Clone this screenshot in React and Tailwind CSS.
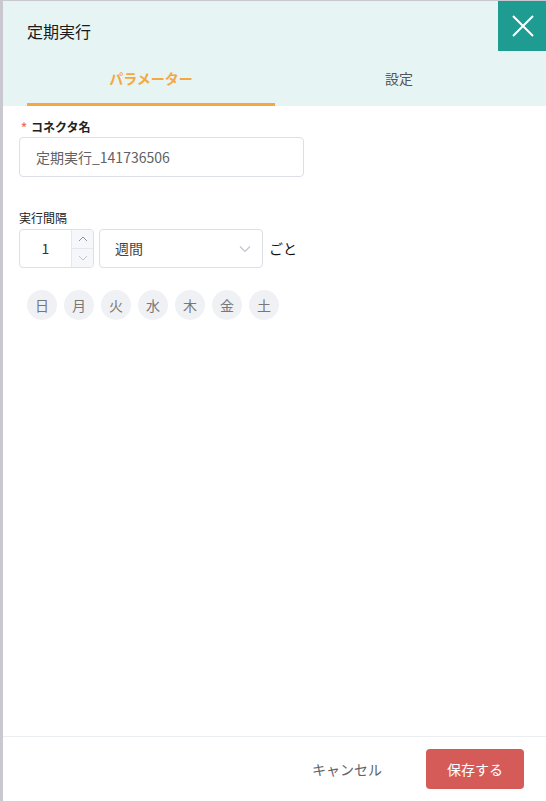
import React from "react";

export default function App() {
  const days = ["日", "月", "火", "水", "木", "金", "土"];
  return (
    <div
      className="w-[546px] h-[801px] bg-[#c9c8d1] flex flex-col overflow-hidden"
      style={{ fontFamily: '"Noto Sans CJK JP", "Noto Sans", sans-serif' }}
    >
      <div className="h-[1px] shrink-0" />
      <div className="flex flex-1 min-h-0">
        <div className="w-[3px] shrink-0" />
        <div className="flex-1 bg-white flex flex-col">
          {/* Header */}
          <div className="bg-[#e6f4f3] h-[105px] shrink-0 flex flex-col relative">
            <div className="h-[50px] flex items-center pt-[10px] pl-[24px] text-[16px] text-[#1a1a1a]">
              定期実行
            </div>
            <button className="absolute top-0 right-0 w-[49px] h-[50px] bg-[#1e9c92] flex items-center justify-center">
              <svg width="22" height="22" viewBox="0 0 22 22">
                <path d="M1 1L21 21M21 1L1 21" stroke="white" strokeWidth="2" />
              </svg>
            </button>
            <div className="flex px-[24px] flex-1">
              <div className="w-[248px] flex flex-col">
                <div className="flex-1 flex items-center justify-center text-[14px] font-bold text-[#f5a742] pt-[2px]">
                  パラメーター
                </div>
                <div className="h-[3px] bg-[#f5a742]" />
              </div>
              <div className="w-[248px] flex flex-col">
                <div className="flex-1 flex items-center justify-center text-[14px] text-[#555] pt-[2px]">
                  設定
                </div>
                <div className="h-[3px]" />
              </div>
            </div>
          </div>

          {/* Body */}
          <div className="flex-1 px-[16px] pt-[12px]">
            <div className="text-[12px] font-bold text-[#222] leading-[18px] flex items-center">
              <span className="text-[#f56c6c] mr-[4px] ml-[2px]">*</span>コネクタ名
            </div>
            <div className="mt-[1px] w-[285px] h-[40px] border border-[#dcdfe6] rounded-[4px] flex items-center pl-[16px] text-[14px] text-[#606266]">
              定期実行_141736506
            </div>

            <div className="mt-[32px] text-[12px] text-[#222] leading-[18px]">実行間隔</div>
            <div className="mt-[2px] flex items-center">
              <div className="w-[75px] h-[39px] border border-[#dcdfe6] rounded-[4px] flex overflow-hidden">
                <div className="flex-1 flex items-center justify-center text-[14px] text-[#333]">1</div>
                <div className="w-[22px] border-l border-[#e4e7ed] flex flex-col bg-[#f5f7fa]">
                  <div className="flex-1 flex items-center justify-center border-b border-[#e4e7ed]">
                    <svg width="10" height="6" viewBox="0 0 10 6">
                      <path d="M1 5L5 1L9 5" stroke="#909399" strokeWidth="1" fill="none" />
                    </svg>
                  </div>
                  <div className="flex-1 flex items-center justify-center">
                    <svg width="10" height="6" viewBox="0 0 10 6">
                      <path d="M1 1L5 5L9 1" stroke="#c0c4cc" strokeWidth="1" fill="none" />
                    </svg>
                  </div>
                </div>
              </div>
              <div className="ml-[5px] w-[164px] h-[39px] border border-[#dcdfe6] rounded-[4px] flex items-center justify-between pl-[15px] pr-[11px] text-[14px] text-[#444]">
                <span>週間</span>
                <svg width="12" height="8" viewBox="0 0 12 8">
                  <path d="M1 1.5L6 6.5L11 1.5" stroke="#c0c4cc" strokeWidth="1.2" fill="none" />
                </svg>
              </div>
              <span className="ml-[6px] text-[14px] text-[#111]">ごと</span>
            </div>

            <div className="mt-[22px] ml-[8px] flex gap-[7px]">
              {days.map((d) => (
                <div
                  key={d}
                  className="w-[30px] h-[30px] rounded-full bg-[#f0f1f4] flex items-center justify-center text-[14px] text-[#777]"
                >
                  {d}
                </div>
              ))}
            </div>
          </div>

          {/* Footer */}
          <div className="h-[65px] shrink-0 border-t border-[#ebeef0] flex items-center justify-end pr-[23px]">
            <button className="w-[100px] h-[40px] text-[14px] text-[#606266] mr-[29px]">キャンセル</button>
            <button className="w-[98px] h-[40px] rounded-[4px] bg-[#d55b59] text-white text-[14px]">保存する</button>
          </div>
        </div>
      </div>
    </div>
  );
}
